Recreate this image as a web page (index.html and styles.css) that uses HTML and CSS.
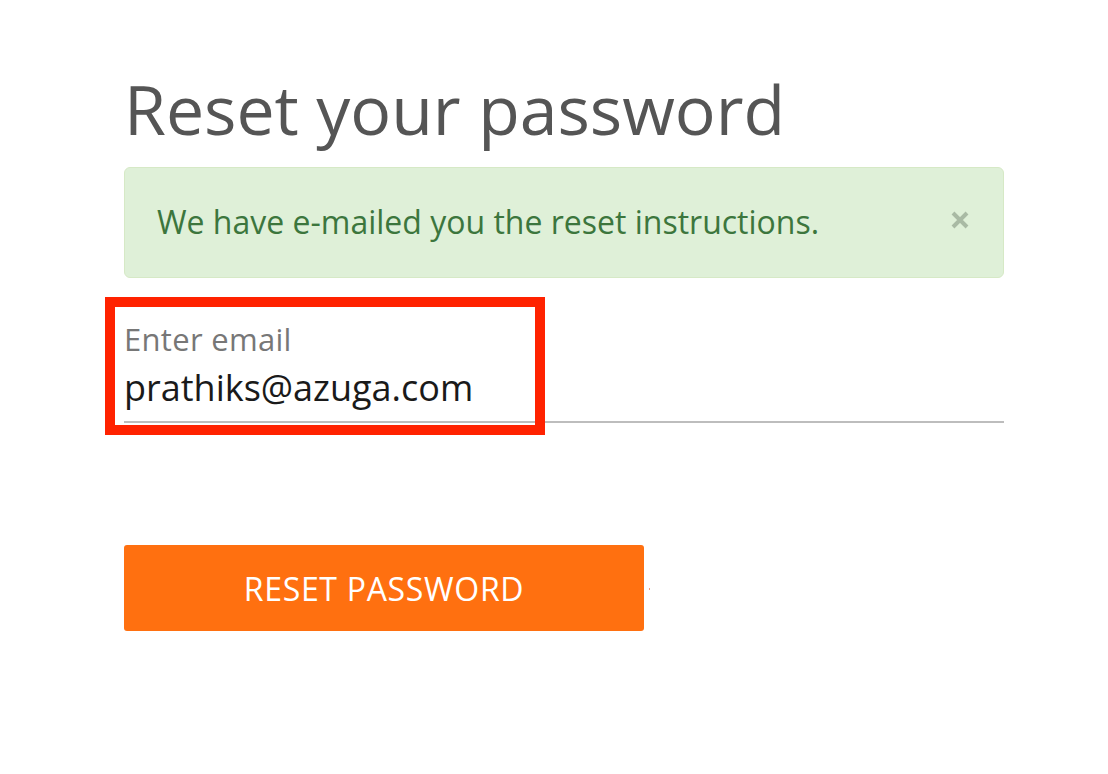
FILE: index.html
```html
<!DOCTYPE html>
<html>
<head>
<meta charset="utf-8">
<link rel="stylesheet" href="styles.css">
</head>
<body>
<div class="page">
  <h1 class="title">Reset your password</h1>
  <div class="alert">
    <span class="alert-text">We have e-mailed you the reset instructions.</span>
    <svg class="alert-close" width="20" height="20" viewBox="0 0 20 20" aria-label="close">
      <path d="M3 3 L17 17 M17 3 L3 17" stroke="#a9baa4" stroke-width="4" stroke-linecap="butt" fill="none"/>
    </svg>
  </div>
  <div class="field">
    <label class="field-label">Enter email</label>
    <div class="field-value">prathiks@azuga.com</div>
    <div class="highlight"></div>
  </div>
  <div class="actions">
    <button class="btn">RESET PASSWORD</button>
    <span class="dot"></span>
  </div>
</div>
</body>
</html>
```

FILE: styles.css
```css
html, body {
  margin: 0;
  padding: 0;
  background: #ffffff;
}
body {
  font-family: "Open Sans", "Noto Sans", sans-serif;
}
.page {
  width: 880px;
  margin-left: 124px;
  padding-top: 64px;
}
.title {
  margin: 0;
  font-size: 68px;
  font-weight: 400;
  line-height: 90px;
  color: #555555;
  letter-spacing: -0.05px;
}
.alert {
  margin-top: 13px;
  height: 111px;
  box-sizing: border-box;
  border: 1px solid #d6e9c6;
  border-radius: 6px;
  background: #dff0d8;
  display: flex;
  align-items: center;
  justify-content: space-between;
  padding: 0 33px 2px 32px;
}
.alert-text {
  color: #3c763d;
  font-size: 32px;
  line-height: 44px;
}
.alert-close {
  display: block;
  margin-top: -3px;
}
.field {
  position: relative;
  margin-top: 41px;
  border-bottom: 2px solid #bdbdbd;
  padding-bottom: 4px;
}
.field-label {
  display: block;
  color: #777777;
  font-size: 31px;
  line-height: 40px;
  letter-spacing: 0.3px;
}
.field-value {
  color: #1a1a1a;
  font-size: 36px;
  line-height: 58px;
}
.highlight {
  position: absolute;
  left: -19px;
  top: -22px;
  width: 440px;
  height: 138px;
  box-sizing: border-box;
  border: 10px solid #ff2200;
}
.actions {
  margin-top: 122px;
  display: flex;
  align-items: center;
}
.btn {
  width: 520px;
  height: 86px;
  border: none;
  border-radius: 3px;
  background: #ff7010;
  color: #ffffff;
  font-family: "Open Sans", "Noto Sans", sans-serif;
  font-size: 32px;
  letter-spacing: 0.7px;
}
.dot {
  width: 1px;
  height: 2px;
  background: #f0a080;
  margin-left: 5px;
  margin-top: 2px;
}
```
